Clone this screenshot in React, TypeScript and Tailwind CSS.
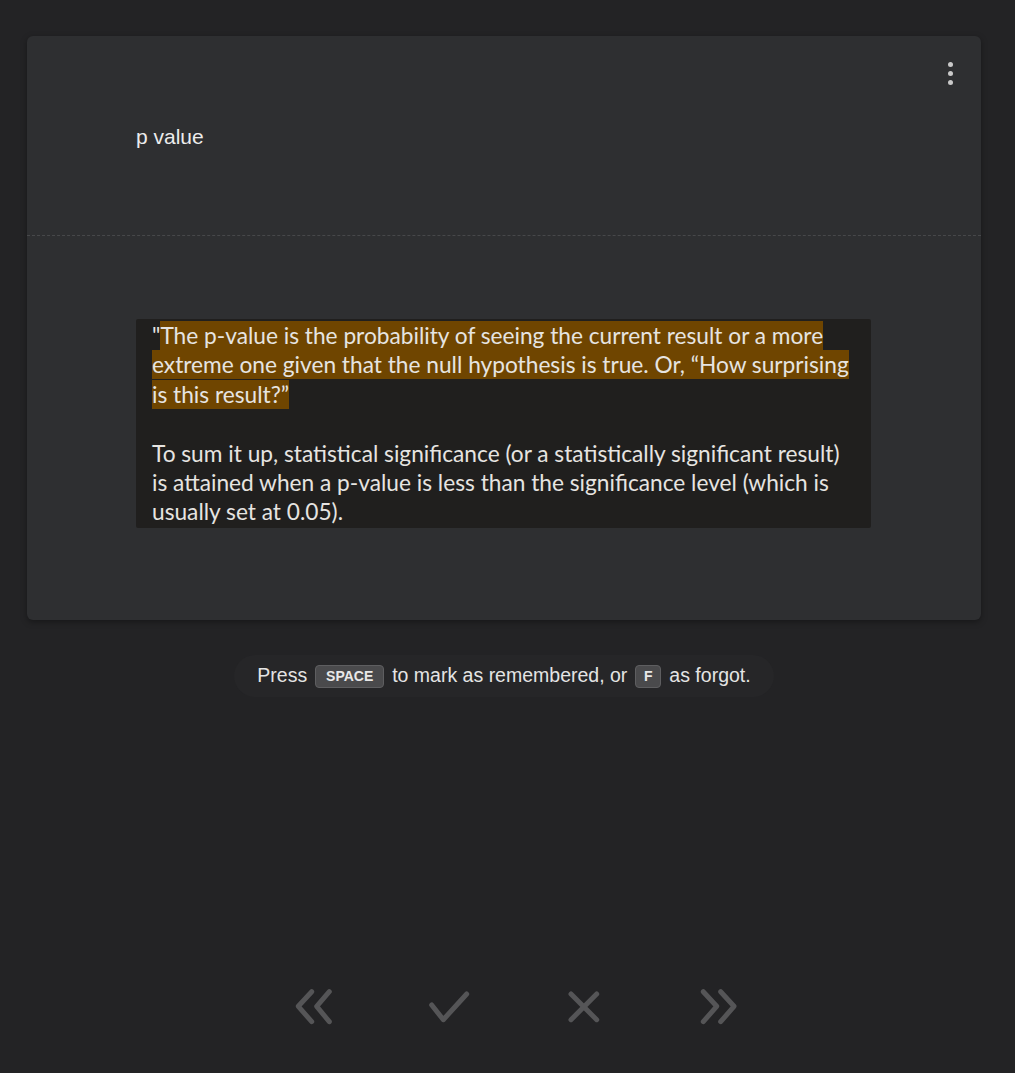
const Kbd = ({ children, w }: { children: React.ReactNode; w: string }) => (
  <span
    className={`mx-[8px] inline-flex h-[23px] ${w} items-center justify-center rounded-[4px] border border-[#5e5e60] bg-[#4a4a4c] text-[14px] font-bold text-[#e8e8e8] align-middle`}
  >
    {children}
  </span>
);

const App: React.FC = () => {
  return (
    <div className="min-h-[1073px] bg-[#232325] px-[27px] pt-[36px] font-['Liberation_Sans',Arial,sans-serif]">
      {/* card */}
      <div className="relative w-[954px] rounded-[6px] bg-[#2e2f31] shadow-[0_2px_6px_rgba(0,0,0,0.35)]">
        <button className="absolute right-[25px] top-[22px] flex h-[30px] w-[12px] flex-col items-center justify-center gap-[4px]">
          <span className="h-[5px] w-[5px] rounded-full bg-[#c9c9c9]" />
          <span className="h-[5px] w-[5px] rounded-full bg-[#c9c9c9]" />
          <span className="h-[5px] w-[5px] rounded-full bg-[#c9c9c9]" />
        </button>

        <div className="h-[200px] border-b border-dashed border-[#47484a] pl-[109px] pt-[90px]">
          <h2 className="text-[21px] leading-[22px] text-[#ececec]">p value</h2>
        </div>

        <div className="h-[384px] pl-[109px] pt-[83px]">
          <div className="w-[735px] rounded-[2px] bg-[#201f1e] px-[16px] pb-[1px] pt-[2px] font-['Lato',sans-serif] text-[22.7px] leading-[29.4px] text-[#e6e4e1]">
            <p>
              "<span className="bg-[#6f4500] py-[1px] [box-decoration-break:clone]">The p-value is the probability of seeing the current result or a more extreme one
                given that the null hypothesis is true. Or, “How surprising is this result?”</span>
            </p>
            <p className="mt-[29.4px]">
              To sum it up, statistical significance (or a statistically significant result) is
              attained when a p-value is less than the significance level (which is usually set at
              0.05).
            </p>
          </div>
        </div>
      </div>

      {/* hint */}
      <div className="mt-[35px] flex w-[954px] justify-center">
        <div className="flex h-[42px] w-[540px] items-center justify-center rounded-full bg-[#262628] text-[19.5px] text-[#e4e4e4]">
          Press
          <Kbd w="w-[69px]">SPACE</Kbd>
          to mark as remembered, or
          <Kbd w="w-[26px]">F</Kbd>
          as forgot.
        </div>
      </div>

      {/* controls */}
      <div className="mt-[285px] flex justify-center pl-[18px] -mx-[27px]">
        <div className="flex gap-[87px]">
          <button className="h-[48px] w-[48px]">
            <svg viewBox="0 0 48 48" className="h-[48px] w-[48px]" fill="none" stroke="#555557" strokeWidth="5" strokeLinecap="round" strokeLinejoin="round">
              <path d="M21.7 9.7 8.3 24.3l13.4 15.4" />
              <path d="M39.3 9.7 26.7 24.3l12.6 15.4" />
            </svg>
          </button>
          <button className="h-[48px] w-[48px]">
            <svg viewBox="0 0 48 48" className="h-[48px] w-[48px]" fill="none" stroke="#555557" strokeWidth="5" strokeLinecap="round" strokeLinejoin="round">
              <path d="M6.7 23l11.6 14.7L41.7 12" />
            </svg>
          </button>
          <button className="h-[48px] w-[48px]">
            <svg viewBox="0 0 48 48" className="h-[48px] w-[48px]" fill="none" stroke="#555557" strokeWidth="5" strokeLinecap="round" strokeLinejoin="round">
              <path d="M11 12l25.7 25.7" />
              <path d="M36.7 12 11 37.7" />
            </svg>
          </button>
          <button className="h-[48px] w-[48px]">
            <svg viewBox="0 0 48 48" className="h-[48px] w-[48px]" fill="none" stroke="#555557" strokeWidth="5" strokeLinecap="round" strokeLinejoin="round">
              <path d="m8.3 9.7 13.4 14.6L8.3 39.7" />
              <path d="M25.7 9.7 39 24.3 25.7 39.7" />
            </svg>
          </button>
        </div>
      </div>
    </div>
  );
};

export default App;
